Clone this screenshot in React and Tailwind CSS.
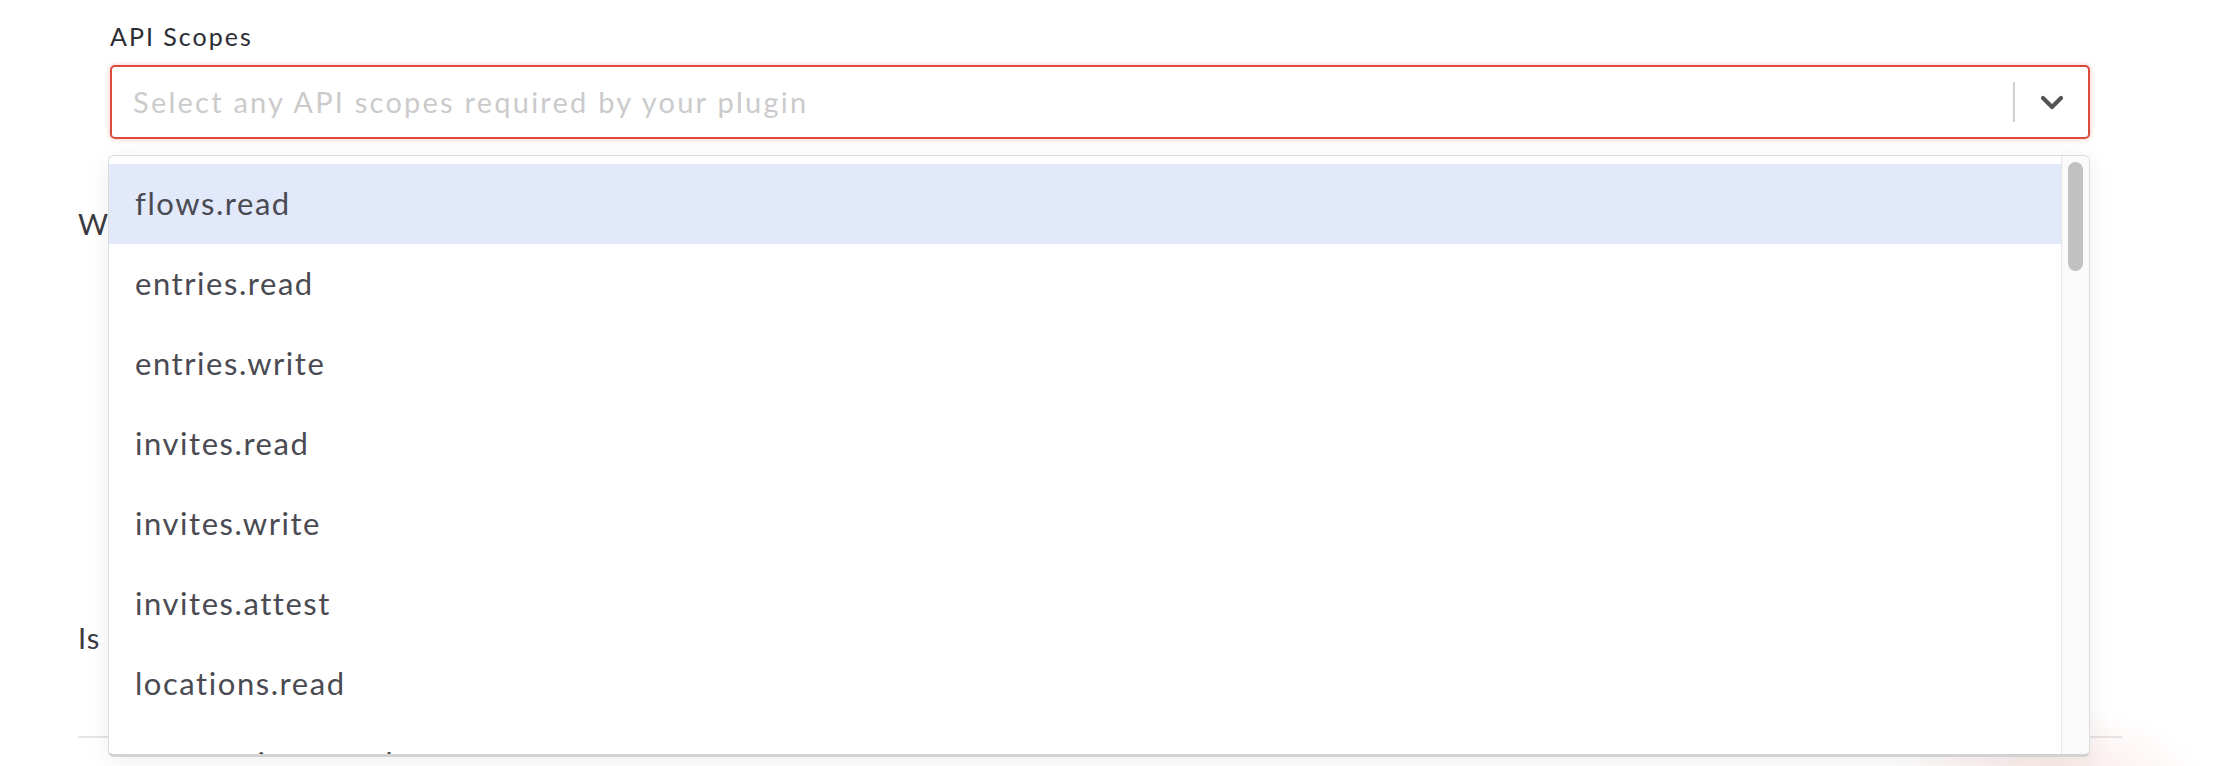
import React from "react";

const scopes = [
  "flows.read",
  "entries.read",
  "entries.write",
  "invites.read",
  "invites.write",
  "invites.attest",
  "locations.read",
  "reservations.read",
  "reservations.write",
];

const ChevronDown = () => (
  <svg width="24" height="15" viewBox="0 0 24 15" fill="none">
    <path
      d="M3 3l9 9 9-9"
      stroke="#555558"
      strokeWidth="4.2"
      strokeLinecap="round"
      strokeLinejoin="round"
    />
  </svg>
);

const ScopeMenu = () => (
  <div className="absolute left-[-2px] right-0 top-[90px] z-10 flex h-[602px] overflow-hidden rounded-[6px] border border-[#dcdcdc] border-b-[3px] border-b-[#d2d2d2] bg-white shadow-[0_4px_24px_rgba(0,0,0,0.07)]">
    <ul className="flex-1 pt-[8px]">
      {scopes.map((scope, i) => (
        <li
          key={scope}
          className={
            i === 0
              ? "flex h-[80px] items-center bg-[#e1e9fb] pb-[2px] pl-[26px] text-[31px] tracking-[0.05em] text-[#4a4a52]"
              : "flex h-[80px] items-center pb-[2px] pl-[26px] text-[31px] tracking-[0.05em] text-[#4a4a52]"
          }
        >
          {scope}
        </li>
      ))}
    </ul>
    <div className="flex w-[28px] shrink-0 justify-center border-l border-[#e6e6e6] bg-[#fafafa] pt-[6px]">
      <div className="h-[109px] w-[15px] rounded-full bg-[#c1c1c1]" />
    </div>
  </div>
);

export default function App() {
  return (
    <div className="relative h-[766px] w-full overflow-hidden bg-white font-['Lato',sans-serif]">
      <div className="ml-[78px] w-[2044px]">
        <div className="relative px-[32px] pt-[21px]">
          <label className="block text-[25px] leading-[30px] tracking-[0.08em] text-[#2c2c34]">
            API Scopes
          </label>
          <div className="relative mt-[14px]">
            <div className="flex h-[74px] items-center rounded-[5px] border-2 border-[#dd4a3e] bg-white shadow-[0_0_5px_rgba(221,74,62,0.35)]">
              <span className="flex-1 pl-[21px] text-[29px] tracking-[0.077em] text-[#cbcbcb]">
                Select any API scopes required by your plugin
              </span>
              <div className="h-[40px] w-[2px] bg-[#cfcfcf]" />
              <div className="flex w-[73px] items-center justify-center">
                <ChevronDown />
              </div>
            </div>
            <ScopeMenu />
          </div>
        </div>

        <p className="mt-[63px] text-[29px] tracking-[0.04em] text-[#3a3a42]">
          Where should Envoy send webhook events?
        </p>
        <div className="h-[370px]" />
        <p className="text-[29px] tracking-[0.04em] text-[#3a3a42]">
          Is this plugin available to all companies?
        </p>
        <div className="mt-[77px] border-b-2 border-[#e6e6ea]" />
      </div>
      <div className="absolute left-[1880px] top-[700px] h-[160px] w-[340px] bg-[radial-gradient(ellipse_at_center,rgba(236,170,165,0.28),transparent_65%)]" />
    </div>
  );
}
